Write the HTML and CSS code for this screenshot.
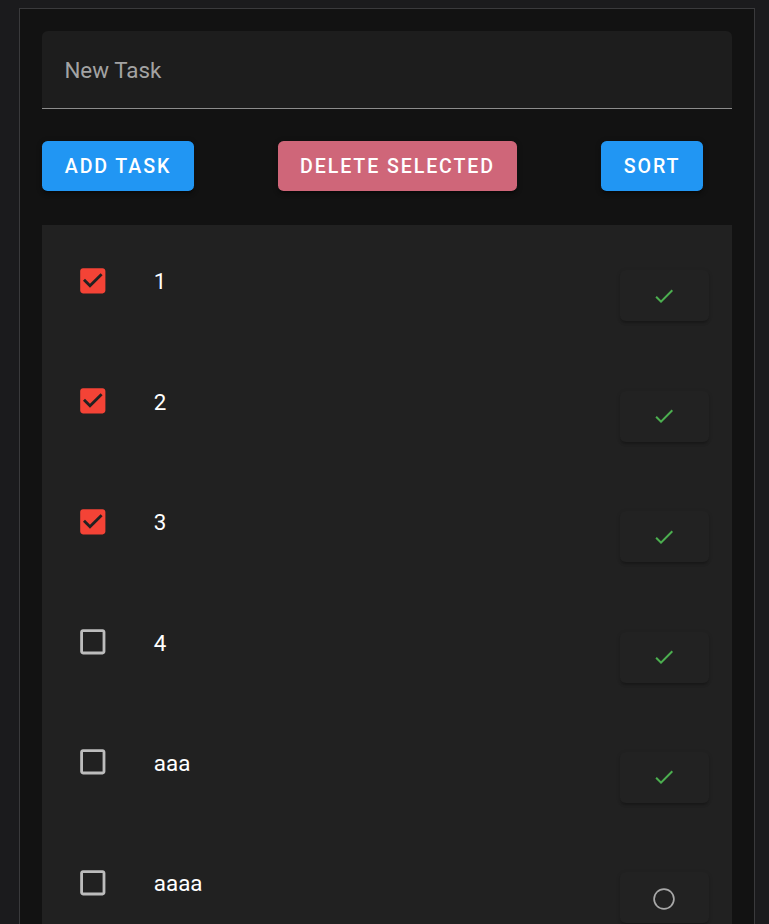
FILE: index.html
```html
<!DOCTYPE html>
<html lang="en">
<head>
<meta charset="utf-8">
<title>Tasks</title>
<link rel="stylesheet" href="styles.css">
</head>
<body>
<div class="app">
  <div class="field"><span class="placeholder">New Task</span></div>
  <div class="actions">
    <button class="btn btn-blue">Add Task</button>
    <button class="btn btn-pink">Delete Selected</button>
    <button class="btn btn-blue">Sort</button>
  </div>
  <ul class="list">
    <li class="row">
      <svg class="box" viewBox="0 0 24 24"><path class="on" d="M19 3H5c-1.11 0-2 .9-2 2v14c0 1.1.89 2 2 2h14c1.11 0 2-.9 2-2V5c0-1.1-.89-2-2-2zm-9 14l-5-5 1.41-1.41L10 14.17l7.59-7.59L19 8l-9 9z"/></svg>
      <span class="label">1</span>
      <button class="done"><svg class="ico" viewBox="0 0 24 24"><path class="green" d="M9 16.17L4.83 12l-1.42 1.41L9 19 21 7l-1.41-1.41z"/></svg></button>
    </li>
    <li class="row">
      <svg class="box" viewBox="0 0 24 24"><path class="on" d="M19 3H5c-1.11 0-2 .9-2 2v14c0 1.1.89 2 2 2h14c1.11 0 2-.9 2-2V5c0-1.1-.89-2-2-2zm-9 14l-5-5 1.41-1.41L10 14.17l7.59-7.59L19 8l-9 9z"/></svg>
      <span class="label">2</span>
      <button class="done"><svg class="ico" viewBox="0 0 24 24"><path class="green" d="M9 16.17L4.83 12l-1.42 1.41L9 19 21 7l-1.41-1.41z"/></svg></button>
    </li>
    <li class="row">
      <svg class="box" viewBox="0 0 24 24"><path class="on" d="M19 3H5c-1.11 0-2 .9-2 2v14c0 1.1.89 2 2 2h14c1.11 0 2-.9 2-2V5c0-1.1-.89-2-2-2zm-9 14l-5-5 1.41-1.41L10 14.17l7.59-7.59L19 8l-9 9z"/></svg>
      <span class="label">3</span>
      <button class="done"><svg class="ico" viewBox="0 0 24 24"><path class="green" d="M9 16.17L4.83 12l-1.42 1.41L9 19 21 7l-1.41-1.41z"/></svg></button>
    </li>
    <li class="row">
      <svg class="box" viewBox="0 0 24 24"><path class="off" d="M19 5v14H5V5h14m0-2H5c-1.1 0-2 .9-2 2v14c0 1.1.9 2 2 2h14c1.1 0 2-.9 2-2V5c0-1.1-.9-2-2-2z"/></svg>
      <span class="label">4</span>
      <button class="done"><svg class="ico" viewBox="0 0 24 24"><path class="green" d="M9 16.17L4.83 12l-1.42 1.41L9 19 21 7l-1.41-1.41z"/></svg></button>
    </li>
    <li class="row">
      <svg class="box" viewBox="0 0 24 24"><path class="off" d="M19 5v14H5V5h14m0-2H5c-1.1 0-2 .9-2 2v14c0 1.1.9 2 2 2h14c1.1 0 2-.9 2-2V5c0-1.1-.9-2-2-2z"/></svg>
      <span class="label">aaa</span>
      <button class="done"><svg class="ico" viewBox="0 0 24 24"><path class="green" d="M9 16.17L4.83 12l-1.42 1.41L9 19 21 7l-1.41-1.41z"/></svg></button>
    </li>
    <li class="row">
      <svg class="box" viewBox="0 0 24 24"><path class="off" d="M19 5v14H5V5h14m0-2H5c-1.1 0-2 .9-2 2v14c0 1.1.9 2 2 2h14c1.1 0 2-.9 2-2V5c0-1.1-.9-2-2-2z"/></svg>
      <span class="label">aaaa</span>
      <button class="done"><svg class="ico ring" viewBox="0 0 24 24"><circle cx="12" cy="12" r="9.9" class="grey"/></svg></button>
    </li>
  </ul>
</div>
</body>
</html>
```

FILE: styles.css
```css
html, body {
  margin: 0;
  padding: 0;
  background: #1b1b1d;
  font-family: Roboto, "Liberation Sans", Arial, sans-serif;
}

.app {
  box-sizing: border-box;
  width: 736px;
  margin: 8px 0 0 19px;
  padding: 22.4px 22.4px 0 22.4px;
  background: #121212;
  border: 1px solid #3a3a3c;
  min-height: 1000px;
}

.field {
  box-sizing: border-box;
  height: 78px;
  background: #1d1d1d;
  border-radius: 5.6px 5.6px 0 0;
  border-bottom: 1.4px solid #8c8c8c;
  padding: 0 0 0 22px;
  display: flex;
  align-items: flex-start;
}

.placeholder {
  margin-top: 24px;
  font-size: 22.4px;
  line-height: 30px;
  color: #a3a3a3;
}

.actions {
  display: flex;
  gap: 84px;
  margin-top: 32px;
}

.btn {
  height: 50px;
  border: 0;
  border-radius: 5.6px;
  padding: 0 22.4px;
  font-family: Roboto, "Liberation Sans", Arial, sans-serif;
  font-size: 19.6px;
  font-weight: 500;
  letter-spacing: 1.9px;
  text-transform: uppercase;
  color: #fff;
  box-shadow: 0 4.2px 1.4px -2.8px rgba(0,0,0,.2), 0 2.8px 2.8px 0 rgba(0,0,0,.14), 0 1.4px 7px 0 rgba(0,0,0,.12);
}

.btn-blue { background: #2196f3; }
.btn-pink { background: #cf6679; }

.list {
  list-style: none;
  margin: 34px 0 0 0;
  padding: 0;
  background: #212121;
}

.row {
  box-sizing: border-box;
  height: 120.4px;
  display: flex;
  align-items: flex-start;
  padding: 0 22.4px 0 33.8px;
}

.box {
  width: 33.6px;
  height: 33.6px;
  margin-top: 38.4px;
  flex: none;
}

.on { fill: #f44336; }
.off { fill: rgba(255,255,255,0.7); }

.label {
  margin: 40px 0 0 44px;
  font-size: 22.4px;
  line-height: 33.6px;
  color: #fff;
  flex: 1;
}

.done {
  width: 89.6px;
  height: 51px;
  margin-top: 45px;
  border: 0;
  border-radius: 5.6px;
  background: #222222;
  box-shadow: 0 3px 3px -1px rgba(0,0,0,.22), 0 1px 4px 0 rgba(0,0,0,.12);
  display: flex;
  align-items: center;
  justify-content: center;
  padding: 0;
  flex: none;
}

.ico {
  width: 24px;
  height: 24px;
}

.ring {
  margin-top: 3px;
}

.green { fill: #4caf50; }
.grey { fill: none; stroke: #a8a8a8; stroke-width: 1.7; }
```
